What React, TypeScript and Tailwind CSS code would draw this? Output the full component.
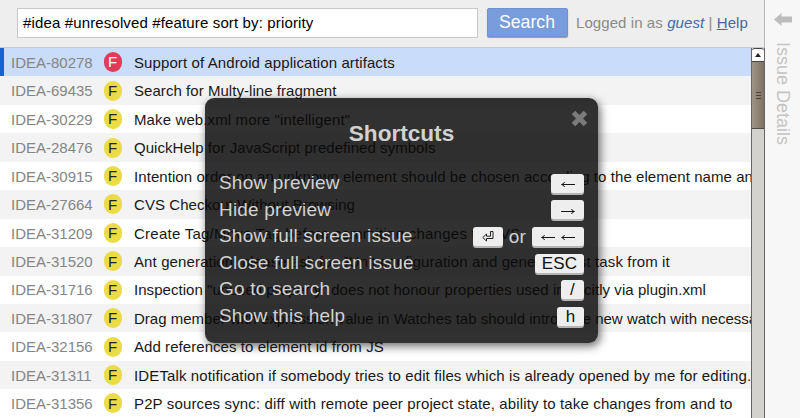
import React from "react";

type Issue = { id: string; title: string; tracking: string };

const issues: Issue[] = [
  { id: "IDEA-80278", title: "Support of Android application artifacts", tracking: "tracking-[0.1px]" },
  { id: "IDEA-69435", title: "Search for Multy-line fragment", tracking: "tracking-[0.05px]" },
  { id: "IDEA-30229", title: 'Make web.xml more "intelligent"', tracking: "tracking-[0.12px]" },
  { id: "IDEA-28476", title: "QuickHelp for JavaScript predefined symbols", tracking: "tracking-[0.05px]" },
  { id: "IDEA-30915", title: "Intention order on an unknown element should be chosen according to the element name an", tracking: "tracking-[0.07px]" },
  { id: "IDEA-27664", title: "CVS Checkout Without Browsing", tracking: "tracking-[0.06px]" },
  { id: "IDEA-31209", title: "Create Tag/Move Tag before commiting changes to CVS", tracking: "tracking-[0.25px]" },
  { id: "IDEA-31520", title: "Ant generation: please ask for JUnit configuration and generate test task from it", tracking: "tracking-[0.12px]" },
  { id: "IDEA-31716", title: 'Inspection "unused property" does not honour properties used implicitly via plugin.xml', tracking: "tracking-[0.05px]" },
  { id: "IDEA-31807", title: "Drag member with expression value in Watches tab should introduce new watch with necessary", tracking: "tracking-[0.01px]" },
  { id: "IDEA-32156", title: "Add references to element id from JS", tracking: "tracking-[0.06px]" },
  { id: "IDEA-31311", title: "IDETalk notification if somebody tries to edit files which is already opened by me for editing.", tracking: "tracking-[0.125px]" },
  { id: "IDEA-31356", title: "P2P sources sync: diff with remote peer project state, ability to take changes from and to", tracking: "tracking-[0.135px]" },
];

function Key({ children, className = "" }: { children: React.ReactNode; className?: string }) {
  return (
    <kbd
      className={`flex h-[19px] items-center justify-center rounded-[3px] bg-[#eeeeee] font-['Liberation_Sans',Arial,sans-serif] text-[17px] leading-none text-[#111] shadow-[0_2px_0_#b5b5b5] ${className}`}
    >
      {children}
    </kbd>
  );
}

function ArrowKey({ right = false }: { right?: boolean }) {
  return (
    <svg width="14" height="7" viewBox="0 0 14 7" fill="none" stroke="#151515" className={right ? "mt-[3px] rotate-180" : "mt-[3px]"}>
      <path d="M1 3.5H14M3.5 1Q3 3 .5 3.5Q3 4 3.5 6" />
    </svg>
  );
}

function EnterIcon() {
  return (
    <svg width="12" height="11" viewBox="0 0 12 11" fill="#eee" stroke="#222" strokeWidth="1">
      <path d="M8.5 .5h2.5v7H4.5v2.5L.8 6.5 4.5 3v2.2h4z" />
    </svg>
  );
}

const shortcuts: { label: string; keys: React.ReactNode }[] = [
  { label: "Show preview", keys: <Key className="w-[33px]"><ArrowKey /></Key> },
  { label: "Hide preview", keys: <Key className="w-[33px]"><ArrowKey right /></Key> },
  {
    label: "Show full screen issue",
    keys: (
      <>
        <Key className="w-[30px]"><EnterIcon /></Key>
        <span className="w-[29px] pt-px text-center">or</span>
        <Key className="w-[52px] gap-[6px]"><ArrowKey /><ArrowKey /></Key>
      </>
    ),
  },
  { label: "Close full screen issue", keys: <Key className="w-[49px] text-[16px]">ESC</Key> },
  { label: "Go to search", keys: <Key className="w-[23px]">/</Key> },
  { label: "Show this help", keys: <Key className="w-[27px]">h</Key> },
];

function Header() {
  return (
    <header className="flex h-[48px] shrink-0 items-start border-r border-b border-r-[#b8b8b8] border-b-[#c9c9c9] bg-[#eeeeee] pt-[8px] pl-[17px]">
      <div className="flex h-[30px] w-[461px] shrink-0 items-center border border-[#c6c9cc] bg-white pl-[5px] text-[15px] tracking-[0.14px] whitespace-nowrap text-black">
        #idea #unresolved #feature sort by: priority
      </div>
      <button className="ml-[9px] flex h-[29px] w-[81px] shrink-0 items-center justify-center rounded-[2px] border border-[#6c94d2] bg-[#789cdc] pr-px text-[17.7px] text-white shadow-[0_1px_1px_#999]">
        Search
      </button>
      <div className="ml-[8px] flex h-[29px] items-center pt-px text-[15px] tracking-[0.08px] whitespace-pre text-[#8b8b83]">
        Logged in as <em className="text-[#426aa6]">guest</em> | <span className="text-[#426aa6]"><u className="underline">H</u>elp</span>
      </div>
    </header>
  );
}

function Scrollbar() {
  return (
    <div className="flex w-[14px] shrink-0 flex-col border-x border-[#656565] bg-[#d4d2ce]">
      <div className="flex h-[14px] items-center justify-center rounded-t-[3px] border-t border-b border-[#444] bg-white">
        <svg width="6" height="4" viewBox="0 0 6 4"><path d="M0 4 3 0 6 4Z" fill="#222" /></svg>
      </div>
      <div className="flex h-[67px] flex-col items-center justify-center gap-[2px] border-b border-[#504a44] bg-linear-to-r from-[#a09487] to-[#7d7165]">
        <i className="h-px w-[5px] bg-[#48423b]" />
        <i className="h-px w-[5px] bg-[#48423b]" />
        <i className="h-px w-[5px] bg-[#48423b]" />
      </div>
    </div>
  );
}

export default function App() {
  return (
    <div className="relative flex h-[418px] w-[800px] overflow-hidden bg-white font-['Liberation_Sans',Arial,sans-serif]">
      <main className="flex w-[765px] shrink-0 flex-col">
        <Header />
        <div className="flex min-h-0 flex-1">
          <ul className="min-w-0 flex-1 overflow-hidden">
            {issues.map((issue, i) => (
              <li
                key={issue.id}
                className={`flex h-[28.45px] items-center text-[15px] whitespace-nowrap text-[#181818] ${
                  i === 0 ? "border-l-4 border-[#1264d2] bg-[#c9dcfa] pl-[7px]" : i % 2 ? "bg-[#f3f3f3] pl-[11px]" : "bg-white pl-[11px]"
                }`}
              >
                <span className="w-[92.5px] shrink-0 pt-[2px] text-[#858585]">{issue.id}</span>
                <span
                  className={`mr-[12.5px] flex h-[20px] w-[18px] shrink-0 items-center justify-center rounded-full pt-px ${
                    i === 0 ? "bg-[#e23b57] text-white" : "bg-[#ebdc46] text-[#222]"
                  }`}
                >
                  F
                </span>
                <span className={`pt-[2px] ${issue.tracking}`}>{issue.title}</span>
              </li>
            ))}
          </ul>
          <Scrollbar />
        </div>
      </main>

      <aside className="flex flex-1 flex-col items-center bg-[#f7f7f7] pt-[13px]">
        <svg width="18" height="13" viewBox="0 0 18 13" fill="#bdbdbd">
          <path d="M0 6.5 7.5 0v3.5H18v6H7.5V13z" />
        </svg>
        <div className="mt-[16px] text-[18px] leading-[20px] whitespace-nowrap text-[#c4c4c4] [writing-mode:vertical-rl]">Issue Details</div>
      </aside>

      <section className="absolute top-[98px] left-[205px] h-[245px] w-[393px] rounded-[9px] bg-[#0a0a0a]/84 pt-[22px] pr-[14px] pl-[14px] text-[#d2d2d2] shadow-[2px_3px_10px_rgba(0,0,0,0.6)]">
        <svg className="absolute top-[12px] right-[10px]" width="17" height="17" viewBox="0 0 17 17" stroke="#7b7b7b" strokeWidth="5">
          <path d="M2.5 2.5 14.5 14.5M14.5 2.5 2.5 14.5" />
        </svg>
        <h2 className="pt-px text-center text-[22.6px] leading-[26px] font-bold">Shortcuts</h2>
        <div className="mt-[23px] flex flex-col text-[19px] tracking-[0.2px]">
          {shortcuts.map((s) => (
            <div key={s.label} className="flex h-[26.6px] items-center justify-between">
              <span>{s.label}</span>
              <span className="flex items-center">{s.keys}</span>
            </div>
          ))}
        </div>
      </section>
    </div>
  );
}
